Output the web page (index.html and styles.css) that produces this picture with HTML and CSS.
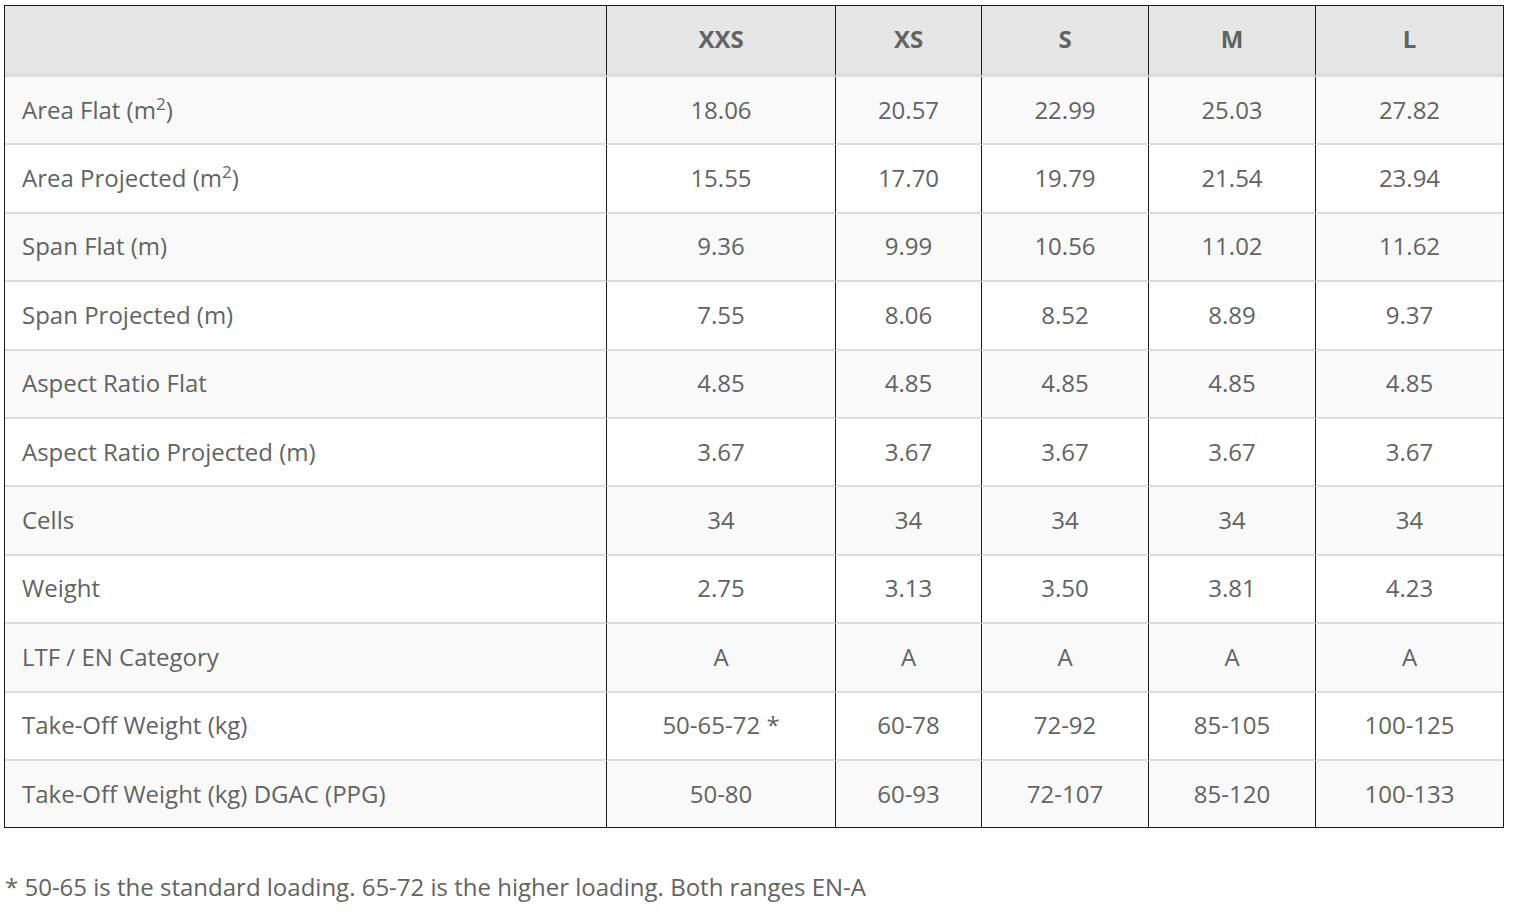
FILE: index.html
```html
<!DOCTYPE html>
<html>
<head>
<meta charset="utf-8">
<link rel="stylesheet" href="styles.css">
</head>
<body>
<div class="wrap">
<table class="specs">
  <thead>
    <tr>
      <th class="label-col"></th>
      <th class="c1">XXS</th>
      <th class="c2">XS</th>
      <th class="c3">S</th>
      <th class="c4">M</th>
      <th class="c5">L</th>
    </tr>
  </thead>
  <tbody>
    <tr><td class="label">Area Flat (m<sup>2</sup>)</td><td>18.06</td><td>20.57</td><td>22.99</td><td>25.03</td><td>27.82</td></tr>
    <tr><td class="label">Area Projected (m<sup>2</sup>)</td><td>15.55</td><td>17.70</td><td>19.79</td><td>21.54</td><td>23.94</td></tr>
    <tr><td class="label">Span Flat (m)</td><td>9.36</td><td>9.99</td><td>10.56</td><td>11.02</td><td>11.62</td></tr>
    <tr><td class="label">Span Projected (m)</td><td>7.55</td><td>8.06</td><td>8.52</td><td>8.89</td><td>9.37</td></tr>
    <tr><td class="label">Aspect Ratio Flat</td><td>4.85</td><td>4.85</td><td>4.85</td><td>4.85</td><td>4.85</td></tr>
    <tr><td class="label">Aspect Ratio Projected (m)</td><td>3.67</td><td>3.67</td><td>3.67</td><td>3.67</td><td>3.67</td></tr>
    <tr><td class="label">Cells</td><td>34</td><td>34</td><td>34</td><td>34</td><td>34</td></tr>
    <tr><td class="label">Weight</td><td>2.75</td><td>3.13</td><td>3.50</td><td>3.81</td><td>4.23</td></tr>
    <tr><td class="label">LTF / EN Category</td><td>A</td><td>A</td><td>A</td><td>A</td><td>A</td></tr>
    <tr><td class="label">Take-Off Weight (kg)</td><td>50-65-72 *</td><td>60-78</td><td>72-92</td><td>85-105</td><td>100-125</td></tr>
    <tr><td class="label">Take-Off Weight (kg) DGAC (PPG)</td><td>50-80</td><td>60-93</td><td>72-107</td><td>85-120</td><td>100-133</td></tr>
  </tbody>
</table>
<p class="note">* 50-65 is the standard loading. 65-72 is the higher loading. Both ranges EN-A</p>
</div>
</body>
</html>
```

FILE: styles.css
```css
html, body {
  margin: 0;
  padding: 0;
  background: #ffffff;
}

body {
  font-family: "Open Sans", "Liberation Sans", sans-serif;
  color: #636363;
  font-size: 24px;
}

.wrap {
  padding: 5px 14px 0 4px;
}

.specs {
  width: 1500px;
  border-collapse: separate;
  border-spacing: 0;
  border: 1px solid #1a1a1a;
  table-layout: fixed;
}

.specs th {
  background: #e6e6e6;
  font-weight: 700;
  color: #636363;
  height: 66px;
  padding: 0 0 1px;
  text-align: center;
  border-bottom: 4px solid #dcdcdc;
  border-right: 1px solid #1a1a1a;
  line-height: 30px;
}

.specs th:last-child,
.specs td:last-child {
  border-right: none;
}

.label-col { width: 601px; }
.c1 { width: 228px; }
.c2 { width: 145px; }
.c3 { width: 166px; }
.c4 { width: 166px; }

.specs td {
  height: 65.4px;
  padding: 0 0 1px;
  text-align: center;
  line-height: 30px;
  border-bottom: 2px solid #dcdcdc;
  border-right: 1px solid #1a1a1a;
}

.specs tbody tr:last-child td {
  border-bottom: none;
}

.specs tbody tr:nth-child(odd) td {
  background: #f9f9f9;
}

.specs tbody tr:nth-child(even) td {
  background: #ffffff;
}

.specs td.label {
  text-align: left;
  padding-left: 17px;
}

.specs sup {
  font-size: 17px;
  line-height: 0;
  vertical-align: 9px;
}

.note {
  margin: 44px 0 0 1px;
  line-height: 30px;
}
```
